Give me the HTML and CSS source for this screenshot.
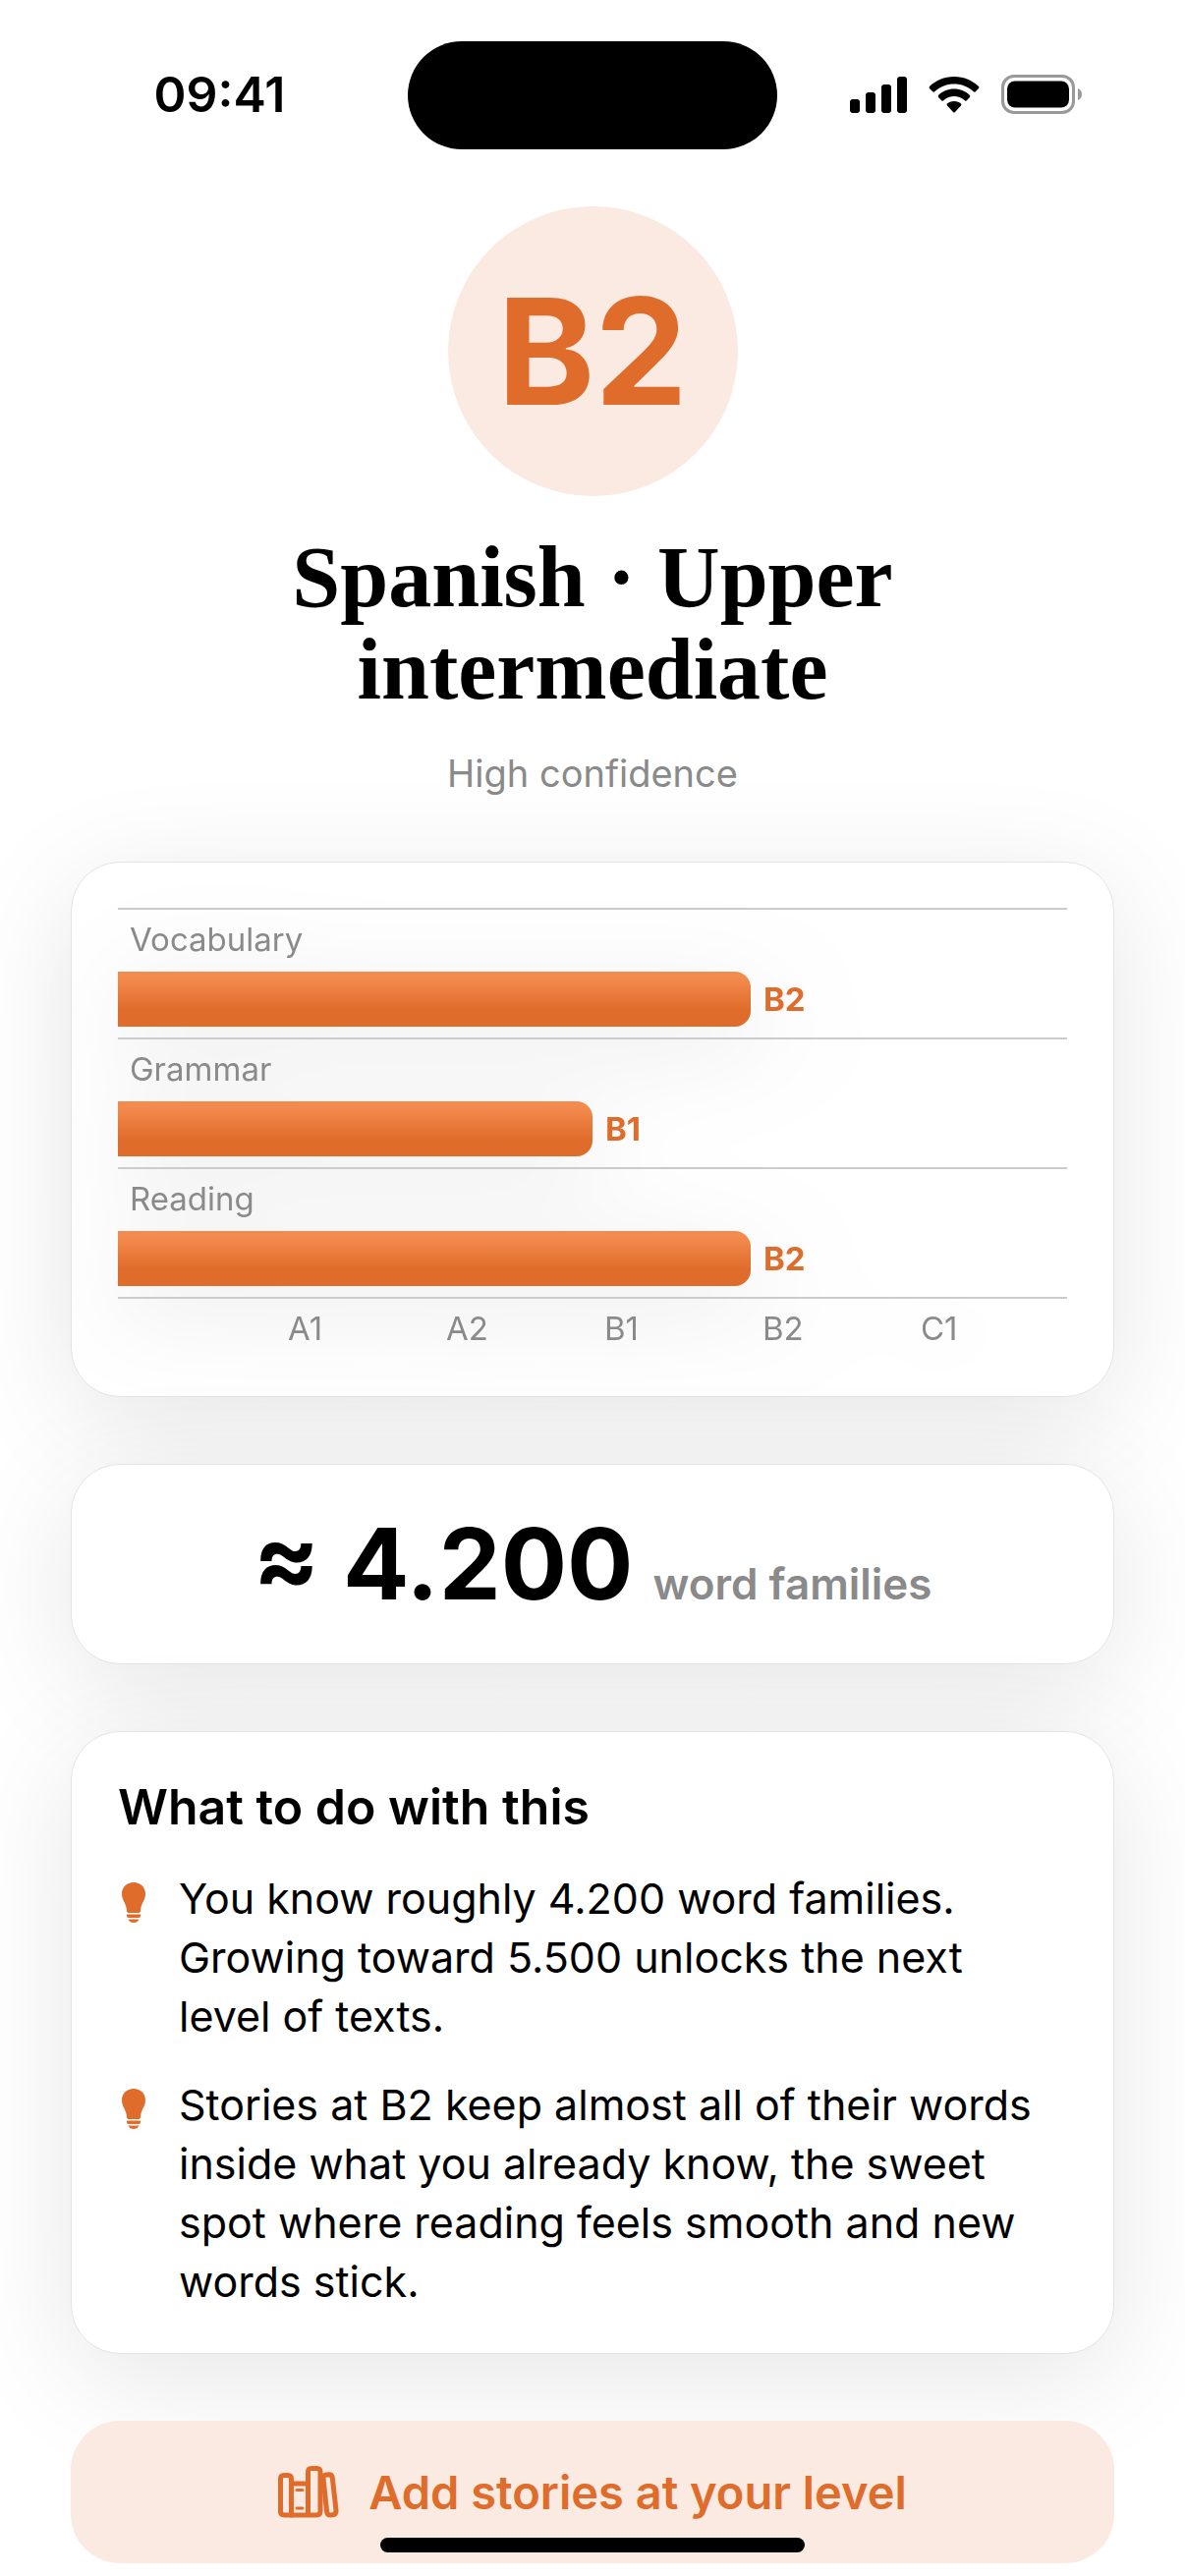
FILE: index.html
```html
<!DOCTYPE html>
<html lang="en">
<head>
<meta charset="utf-8">
<meta name="viewport" content="width=device-width, initial-scale=1">
<title>Spanish level</title>
<link rel="stylesheet" href="styles.css">
</head>
<body>
<header class="status-bar">
  <time class="clock">09:41</time>
  <div class="island"></div>
  <div class="indicators">
    <svg width="58" height="38" viewBox="0 0 58 38" aria-label="Signal">
      <rect x="0" y="24" width="10" height="14" rx="3"/>
      <rect x="16" y="17" width="10" height="21" rx="3"/>
      <rect x="32" y="9" width="10" height="29" rx="3"/>
      <rect x="48" y="1" width="10" height="37" rx="3"/>
    </svg>
    <svg width="52" height="38" viewBox="0 0 52 38" aria-label="Wi-Fi">
      <path d="M26 1C36 1 45 5 51 11Q52 12 51 13L47.500 16.500Q46.500 17 45.500 16C40 11 33.500 8.500 26 8.500S12 11 6.500 16Q5.500 17 4.500 16.500L1 13Q0 12 1 11C7 5 16 1 26 1Z"/>
      <path d="M26 13.500C32.500 13.500 38 16 42 20Q42.500 21 42 22L38.500 25.500Q37.500 26 36.500 25C33.500 22.500 30 21 26 21S18.500 22.500 15.500 25Q14.500 26 13.500 25.500L10 22Q9.500 21 10 20C14 16 19.500 13.500 26 13.500Z"/>
      <path d="M26 26C29 26 31.500 27 33 28.500Q33.800 29.500 33 30.500L27 37Q26 38 25 37L19 30.500Q18.200 29.500 19 28.500C20.500 27 23 26 26 26Z"/>
    </svg>
    <svg width="82" height="40" viewBox="0 0 82 40" aria-label="Battery">
      <rect x="1.500" y="1.500" width="72" height="37" rx="11.500" fill="none" stroke="#999" stroke-width="3"/>
      <rect x="6" y="6.500" width="63" height="27" rx="8"/>
      <path d="M78 14Q82 15.500 82 20T78 26Z" fill="#999"/>
    </svg>
  </div>
</header>

<main class="page">
  <section class="hero">
    <div class="badge">B2</div>
    <h1 class="title">Spanish · Upper intermediate</h1>
    <p class="confidence">High confidence</p>
  </section>

  <section class="card chart-card" aria-label="Skill levels">
    <div class="chart">
      <div class="row">
        <span class="row-label">Vocabulary</span>
        <div class="track"><div class="bar" style="--level: 4"></div><span class="value">B2</span></div>
      </div>
      <div class="row">
        <span class="row-label">Grammar</span>
        <div class="track"><div class="bar" style="--level: 3"></div><span class="value">B1</span></div>
      </div>
      <div class="row">
        <span class="row-label">Reading</span>
        <div class="track"><div class="bar" style="--level: 4"></div><span class="value">B2</span></div>
      </div>
      <div class="axis">
        <span></span><span>A1</span><span>A2</span><span>B1</span><span>B2</span><span>C1</span>
      </div>
    </div>
  </section>

  <section class="card total">
    <strong class="count">≈ 4.200</strong>
    <span class="unit">word families</span>
  </section>

  <section class="card advice">
    <h2 class="advice-title">What to do with this</h2>
    <ul class="tips">
      <li class="tip">
        <svg class="bulb" width="32" height="42" viewBox="0 0 32 42" aria-hidden="true">
          <path d="M16 0C23 0 28 5 28 11.500C28 19 23.200 21 23 29Q23 31 21.500 31H10.500Q9 31 9 29C8.800 21 4 19 4 11.500C4 5 9 0 16 0ZM9 32.500H23V34Q23 36 21.500 36H10.500Q9 36 9 34ZM10.500 37.500H21.500Q20 41 16 41T10.500 37.500Z"/>
        </svg>
        <p>You know roughly 4.200 word families. Growing toward 5.500 unlocks the next level of texts.</p>
      </li>
      <li class="tip">
        <svg class="bulb" width="32" height="42" viewBox="0 0 32 42" aria-hidden="true">
          <path d="M16 0C23 0 28 5 28 11.500C28 19 23.200 21 23 29Q23 31 21.500 31H10.500Q9 31 9 29C8.800 21 4 19 4 11.500C4 5 9 0 16 0ZM9 32.500H23V34Q23 36 21.500 36H10.500Q9 36 9 34ZM10.500 37.500H21.500Q20 41 16 41T10.500 37.500Z"/>
        </svg>
        <p>Stories at B2 keep almost all of their words inside what you already know, the sweet spot where reading feels smooth and new words stick.</p>
      </li>
    </ul>
  </section>

  <button class="add" type="button">
    <svg class="books" width="62" height="54" viewBox="0 0 62 54" aria-hidden="true">
      <path d="M2.500 46V13Q2.500 9.500 6 9.500H10Q13.500 9.500 13.500 13V50"/>
      <path d="M13.500 18H30.500"/>
      <path d="M30.500 50V6Q30.500 2.500 34 2.500H39.500Q43 2.500 43 6V46Q43 50 39 50H6.500Q2.500 50 2.500 46"/>
      <path d="M46 12.500Q45.700 9.500 49 9L51.500 8.700Q54.800 8.500 55.300 12L59 45Q59.300 49.500 55.500 49.800L53.500 50Q50 50.300 49.600 46.500Z"/>
      <path class="detail" d="M19 24.500H25M19 43H25"/>
    </svg>
    <span>Add stories at your level</span>
  </button>
</main>
<div class="home-indicator"></div>
</body>
</html>
```
FILE: styles.css
```css
:root {
  --accent: #e06c2b;
  --accent-light: #f38b4e;
  --tint: #faeae1;
  --muted: #8a8a8a;
  --line: #cbcbcb;
}

* { box-sizing: border-box; }

body {
  margin: 0;
  background: #fff;
  color: #000;
  font-family: Inter, "Liberation Sans", sans-serif;
}

h1, h2, p, ul { margin: 0; padding: 0; }

.status-bar {
  display: grid;
  grid-template-columns: 1fr 376px 1fr;
  align-items: center;
  justify-items: center;
  padding: 42px 32px 0;
}

.clock {
  padding-bottom: 2px;
  font-size: 50px;
  font-weight: 600;
  line-height: 60px;
}

.island {
  width: 100%;
  height: 110px;
  border-radius: 55px;
  background: #000;
}

.indicators {
  display: flex;
  align-items: center;
  gap: 22px;
  padding-bottom: 2px;
}

.page {
  display: flex;
  flex-direction: column;
  gap: 68px;
  padding: 58px 72px 13px;
}

.hero {
  display: flex;
  flex-direction: column;
  align-items: center;
  text-align: center;
}

.badge {
  display: grid;
  place-items: center;
  width: 295px;
  height: 295px;
  border-radius: 50%;
  background: var(--tint);
  color: var(--accent);
  font-size: 150px;
  font-weight: 700;
}

.title {
  max-width: 800px;
  margin-top: 36px;
  font-family: "Liberation Serif", serif;
  font-size: 88px;
  font-weight: 700;
  line-height: 94px;
}

.confidence {
  margin-top: 36px;
  color: var(--muted);
  font-size: 38px;
  line-height: 44px;
}

.card {
  padding: 46px 47px;
  border: 1px solid #e4e4e4;
  border-radius: 50px;
  background: #fff;
  box-shadow: 0 24px 120px rgba(0, 0, 0, 0.1);
}

.chart {
  filter: drop-shadow(0 24px 48px rgba(0, 0, 0, 0.08));
}

.row {
  padding: 10px 0 11px;
  border-top: 2px solid var(--line);
}

.row-label {
  display: block;
  margin-bottom: 13px;
  padding-left: 12px;
  color: var(--muted);
  font-size: 33px;
  line-height: 40px;
}

.track {
  display: flex;
  align-items: center;
  gap: 13px;
}

.bar {
  width: calc(var(--level) / 6 * 100%);
  height: 56px;
  border-radius: 0 16px 16px 0;
  background: linear-gradient(var(--accent-light) 10%, var(--accent) 70%);
}

.value {
  color: var(--accent);
  font-size: 33px;
  font-weight: 700;
  line-height: 40px;
}

.axis {
  display: grid;
  grid-template-columns: repeat(6, 1fr);
  padding: 10px 0 3px;
  border-top: 2px solid var(--line);
  color: var(--muted);
  font-size: 33px;
  line-height: 40px;
}

.axis span { padding-left: 12px; }

.total {
  display: flex;
  align-items: baseline;
  justify-content: center;
  gap: 20px;
  padding-block: 41px;
}

.count {
  font-size: 100px;
  font-weight: 700;
  line-height: 120px;
}

.unit {
  color: var(--muted);
  font-size: 44px;
  font-weight: 600;
}

.advice { padding-bottom: 43px; }

.advice-title {
  font-size: 50px;
  font-weight: 600;
  line-height: 60px;
}

.tips {
  display: flex;
  flex-direction: column;
  gap: 30px;
  margin-top: 33px;
  list-style: none;
}

.tip {
  display: grid;
  grid-template-columns: 32px 1fr;
  gap: 30px;
  padding-right: 12px;
  font-size: 43px;
  line-height: 60px;
}

.bulb {
  margin-top: 14px;
  fill: var(--accent);
}

.add {
  display: flex;
  align-items: center;
  justify-content: center;
  gap: 30px;
  height: 145px;
  padding: 0 46px;
  border: 0;
  border-radius: 50px;
  background: var(--tint);
  color: var(--accent);
  font: 600 47px/60px Inter, "Liberation Sans", sans-serif;
}

.books {
  fill: none;
  stroke: var(--accent);
  stroke-width: 5;
  stroke-linecap: round;
  stroke-linejoin: round;
}

.books .detail { stroke-width: 3; }

.home-indicator {
  position: fixed;
  bottom: 24px;
  left: 50%;
  width: 432px;
  height: 15px;
  margin-left: -216px;
  border-radius: 8px;
  background: #000;
}
```
